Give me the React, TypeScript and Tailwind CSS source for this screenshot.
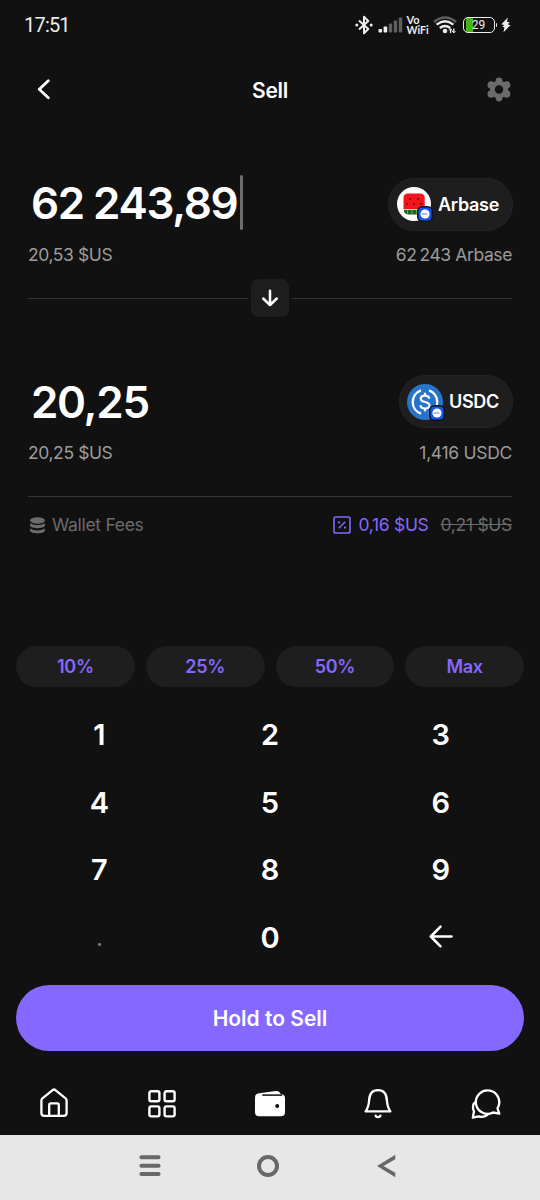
import type React from "react"
import clsx from "clsx"

const quickAmounts = ["10%", "25%", "50%", "Max"]
const keys = ["1", "2", "3", "4", "5", "6", "7", "8", "9", ".", "0", "back"]

const StatusBar = () => (
  <div className="flex h-[50px] shrink-0 items-center pl-6 pr-[29px]">
    <span className="font-[Roboto] text-[20px] leading-none tracking-[-0.8px] text-[#ededed]">17:51</span>
    <div className="ml-auto flex items-center text-[#ededed]">
      <svg width="18" height="20" viewBox="0 0 18 20" fill="none" stroke="currentColor" strokeWidth="2" strokeLinejoin="round">
        <path d="M4 5.6 13.3 14 9 18.2V1.8L13.3 6 4 14.4" />
        <circle cx="1.8" cy="10" r="1.5" fill="currentColor" stroke="none" />
        <circle cx="16.2" cy="10" r="1.5" fill="currentColor" stroke="none" />
      </svg>
      <svg className="ml-[5px]" width="25" height="16" viewBox="0 0 25 16">
        <rect x="0.5" y="12" width="3.6" height="3.5" rx="0.8" fill="currentColor" />
        <rect x="5.6" y="9.5" width="3.6" height="6" rx="0.8" fill="currentColor" />
        <rect x="10.8" y="6.5" width="3.4" height="9" rx="0.8" fill="#5f5f5f" />
        <rect x="15.8" y="3.5" width="3.4" height="12" rx="0.8" fill="#5f5f5f" />
        <rect x="20.8" y="0.5" width="3.4" height="15" rx="0.8" fill="#5f5f5f" />
      </svg>
      <div className="ml-[4px] w-[23px] font-[Lato] font-bold">
        <div className="text-[11px] leading-[11px]">Vo</div>
        <div className="text-[10.5px] leading-[11px]">WiFi</div>
      </div>
      <svg className="ml-[3px]" width="25" height="18" viewBox="0 0 25 18" fill="none" strokeWidth="2.4">
        <path d="M1 6Q12 -3 23 6" stroke="#5f5f5f" />
        <path d="M3.6 8.6Q12 2 20.4 8.6" stroke="currentColor" />
        <path d="M6.8 12Q12 8 17.2 12" stroke="currentColor" />
        <circle cx="12" cy="15" r="2.3" fill="currentColor" />
        <path d="M17.6 17V13M20.8 12.6V16.6" stroke="currentColor" strokeWidth="1.3" />
        <path d="m16 14.6 1.6-2 1.6 2M19.2 15l1.6 2 1.6-2" stroke="currentColor" strokeWidth="1" />
      </svg>
      <div className="ml-[5px] flex h-4 w-8 items-center rounded-[5px] border-[1.5px] border-[#ededed] bg-[linear-gradient(90deg,transparent_2px,#43b410_2px,#43b410_9px,transparent_9px)]">
        <span className="w-full text-center font-[Roboto] text-[12px] leading-none">29</span>
      </div>
      <div className="ml-px h-1 w-[1.5px] rounded-r bg-[#ededed]" />
      <svg className="ml-[4px]" width="10" height="16" viewBox="0 0 10 16" fill="currentColor">
        <path d="M6.8 0.5 0.4 7.2 3.6 8.2 1.2 9.6 3.4 10.4 2.4 15.5 9.4 8.2 6.6 7.2 9 5.6 6 4.8Z" />
      </svg>
    </div>
  </div>
)

const GearIcon = () => (
  <svg width="24" height="26" viewBox="0 0 24 26" fill="#6b6b6b">
    <circle cx="12" cy="12.5" r="9" />
    <circle cx="12" cy="3.9" r="3.4" />
    <circle cx="12" cy="21.1" r="3.4" />
    <circle cx="4.2" cy="8" r="3.7" />
    <circle cx="19.8" cy="8" r="3.7" />
    <circle cx="4.2" cy="17" r="3.7" />
    <circle cx="19.8" cy="17" r="3.7" />
    <circle cx="12" cy="12.5" r="4.2" fill="#111111" />
  </svg>
)

const WatermelonIcon = () => (
  <svg width="34" height="34" viewBox="0 0 34 34">
    <circle cx="17" cy="17" r="17" fill="#fff" />
    <path d="M7 21H27.5V24Q27 27.5 23 27.5H12Q7.5 27.5 7 24Z" fill="#1c5c26" />
    <path d="M10.5 23V27M15 23V27.5M19.5 23V27.5M24 23V27" stroke="#4fae43" strokeWidth="1.3" />
    <path d="M6.5 11Q6.5 6.5 11 6.5H23Q27.7 6.5 27.7 11V22H6.5Z" fill="#f5141e" />
    <path d="M6.8 22.5H27.5" stroke="#b9e6a0" strokeWidth="1" />
    <g fill="#3a0d10">
      <circle cx="13" cy="12" r="0.9" />
      <circle cx="21" cy="12" r="0.9" />
      <circle cx="10" cy="17" r="0.9" />
      <circle cx="17" cy="17" r="0.9" />
      <circle cx="24" cy="17" r="0.9" />
    </g>
  </svg>
)

const UsdcIcon = () => (
  <svg width="36" height="36" viewBox="0 0 36 36" fill="none" stroke="#fff">
    <circle cx="18" cy="18" r="18" fill="#2775ca" stroke="none" />
    <path d="M14 6.3a12.4 12.4 0 0 0 0 23.4M22 6.3a12.4 12.4 0 0 1 0 23.4" strokeWidth="2.3" />
    <path d="M22.3 14.6c-.3-2-1.8-3-4.3-3-2.6 0-4.2 1.2-4.2 3.1 0 4.6 8.7 2.1 8.7 6.6 0 2-1.8 3.2-4.5 3.2-2.8 0-4.4-1.1-4.6-3.3M18 8.8v2.8M18 24.5v2.8" strokeWidth="2.2" />
  </svg>
)

const TokenPill = ({ name, children, className }: { name: string; children: React.ReactNode; className: string }) => (
  <button
    className={clsx(
      "-mr-px flex h-[53px] items-center rounded-full border border-[#242424] bg-[#1e1e1e] pr-[13px] text-[18px] font-semibold tracking-[-0.3px]",
      className
    )}
  >
    <span className="relative">
      {children}
      {/* network badge */}
      <svg className="absolute -bottom-[1px] -right-[2px]" width="16" height="16" viewBox="0 0 16 16">
        <rect width="16" height="16" rx="5.5" fill="#10131c" />
        <rect x="1.5" y="1.5" width="13" height="13" rx="4" fill="#1557ee" />
        <circle cx="8" cy="8" r="4.6" fill="#fff" />
        <path d="M4.6 8H10.4" stroke="#6f9af2" strokeWidth="1.2" />
      </svg>
    </span>
    <span>{name}</span>
  </button>
)

const navIcon = "h-[34px] w-[34px]"

const BottomNav = () => (
  <nav className="mt-[36px] flex justify-around">
    <svg className={navIcon} viewBox="0 0 34 34" fill="none" stroke="#fff" strokeWidth="2.3" strokeLinejoin="round">
      <path d="M4.4 13.5Q4.4 12.2 5.4 11.3L15.6 3.1Q17 2 18.4 3.1L28.6 11.3Q29.6 12.2 29.6 13.5V26Q29.6 28.9 26.7 28.9H7.3Q4.4 28.9 4.4 26Z" />
      <path d="M12.2 28.5V18Q12.2 16.4 13.8 16.4H20.2Q21.8 16.4 21.8 18V28.5" />
    </svg>
    <svg className={navIcon} viewBox="0 0 34 34" fill="none" stroke="#fff" strokeWidth="2.4">
      <rect x="4.4" y="4.2" width="10" height="10" rx="1.8" />
      <rect x="19.6" y="4.2" width="10" height="10" rx="1.8" />
      <rect x="4.4" y="19.4" width="10" height="10" rx="1.8" />
      <rect x="19.6" y="19.4" width="10" height="10" rx="1.8" />
    </svg>
    <svg className={navIcon} viewBox="0 0 34 34" fill="#fff">
      <path d="M2.2 9.8Q2.2 6.8 6 6.2L23 4Q26.6 3.6 27.8 7.6H10Z" />
      <path d="M2 11Q2 7.2 6 7.2H28Q32 7.2 32 11.2V25Q32 29.3 27.8 29.3H6.2Q2 29.3 2 25Z" />
      <path d="M10 8.2H28.5" stroke="#333" strokeWidth="1.7" strokeLinecap="round" />
      <circle cx="24.2" cy="19" r="2" fill="#111" />
    </svg>
    <svg className={navIcon} viewBox="0 0 34 34" fill="none" stroke="#fff" strokeWidth="2.3" strokeLinejoin="round" strokeLinecap="round">
      <path d="M4.6 24.4Q7.5 20.5 8.1 13.5C8.4 6.5 12 3.1 17 3.1S25.6 6.5 25.9 13.5Q26.5 20.5 29.4 24.4Z" />
      <path d="M14.6 28.6Q15 30.2 17 30.2T19.4 28.6" />
    </svg>
    <svg className={navIcon} viewBox="0 0 34 34" fill="none" stroke="#fff" strokeWidth="2.3" strokeLinejoin="round" strokeLinecap="round">
      <path d="M28.5 21.3A11.7 11.7 0 1 0 24 25.5L30.3 26.7Z" />
      <path d="M5.5 15.7Q2.6 19 5 24.5L3.8 30.6L9.5 29.3Q14.5 30.8 18.5 27.8" />
    </svg>
  </nav>
)

const SystemBar = () => (
  <div className="flex h-[65px] shrink-0 items-center justify-center gap-[94px] bg-[#e7e7e7] pb-[3px] pr-[4px]">
    <svg width="24" height="24" viewBox="0 0 24 24" stroke="#686868" strokeWidth="4" strokeLinecap="round">
      <path d="M3.4 3.2H20.6M3.4 11.7H20.6M3.4 20H20.6" />
    </svg>
    <svg width="24" height="24" viewBox="0 0 24 24" fill="none" stroke="#686868" strokeWidth="4">
      <circle cx="12" cy="12" r="9" />
    </svg>
    <svg width="24" height="24" viewBox="0 0 24 24" fill="#686868">
      <path d="M21.3 0.8V5.2L9.5 12L21.3 18.8V23.2L3 12Z" />
    </svg>
  </div>
)

export default function App() {
  return (
    <div className="flex h-[1200px] w-[540px] flex-col overflow-hidden bg-[#111111] font-[Inter,sans-serif] text-white">
      <StatusBar />

      {/* Header */}
      <header className="grid h-20 shrink-0 grid-cols-3 items-center pl-[36px] pr-[29px]">
        <svg width="16" height="22" viewBox="0 0 16 22" fill="none" stroke="#fff" strokeWidth="2.8" strokeLinecap="round" strokeLinejoin="round">
          <path d="M12.3 1.8 3.3 10.3 12.3 18.8" />
        </svg>
        <h1 className="pr-[7px] pt-[2px] text-center text-[21px] font-semibold tracking-[-0.3px]">Sell</h1>
        <div className="flex justify-end">
          <GearIcon />
        </div>
      </header>

      {/* You sell */}
      <section className="px-7 pt-[45px]">
        <div className="flex h-[55px] items-center justify-between">
          <div className="flex items-center pl-[3px]">
            <span className="text-[44px] font-semibold leading-none tracking-[-1.3px]">
              62<span className="ml-[9px]">243,89</span>
            </span>
            <span className="ml-[3px] h-[55px] w-[3px] rounded bg-[#6d6d6d]" />
          </div>
          <TokenPill name="Arbase" className="mt-[3px] gap-[7px] pl-2">
            <WatermelonIcon />
          </TokenPill>
        </div>
        <div className="mt-[13px] flex h-6 items-center justify-between text-[17.5px] tracking-[-0.4px] text-[#9b9b9b]">
          <span>20,53 $US</span>
          <span>
            62<span className="ml-[3px]">243 Arbase</span>
          </span>
        </div>
      </section>

      {/* Swap direction */}
      <div className="mt-[12px] flex h-[38px] shrink-0 items-center gap-[3px] px-7">
        <div className="h-px flex-1 bg-[#333]" />
        <button className="flex h-[38px] w-[38px] items-center justify-center rounded-lg bg-[#1e1e1e]">
          <svg width="18" height="18" viewBox="0 0 18 18" fill="none" stroke="#fff" strokeWidth="2.5" strokeLinecap="round" strokeLinejoin="round">
            <path d="M9 1.8V15.8M2.2 9.5 9 16 15.8 9.5" />
          </svg>
        </button>
        <div className="h-px flex-1 bg-[#333]" />
      </div>

      {/* You receive */}
      <section className="px-7 pt-[58px]">
        <div className="flex h-[54px] items-center justify-between">
          <span className="pl-[3px] text-[44px] font-semibold leading-none tracking-[-1.3px]">20,25</span>
          <TokenPill name="USDC" className="mb-px gap-[6px] pl-[7px]">
            <UsdcIcon />
          </TokenPill>
        </div>
        <div className="mt-3 flex h-6 items-center justify-between text-[17.5px] tracking-[-0.4px] text-[#9b9b9b]">
          <span>20,25 $US</span>
          <span className="tracking-[-0.3px]">1,416 USDC</span>
        </div>
        <div className="mt-[31px] h-px bg-[#383838]" />
        <div className="mt-[16px] flex h-6 items-center text-[17.5px] tracking-[-0.3px] text-[#6b6b6b]">
          <svg className="ml-[1px]" width="17" height="17" viewBox="0 0 17 17" fill="#6b6b6b">
            <ellipse cx="8.5" cy="3.5" rx="7.5" ry="3.2" />
            <path d="M1 6.2Q8.5 10 16 6.2V8.6C15 12.2 2 12.2 1 8.6Z" />
            <path d="M1 11.4Q8.5 15.4 16 11.4V13.6C15 17.4 2 17.4 1 13.6Z" />
          </svg>
          <span className="ml-[6px]">Wallet Fees</span>
          <svg className="ml-auto" width="18" height="18" viewBox="0 0 18 18" fill="none" stroke="#8468ff">
            <rect x="1" y="1" width="16" height="16" rx="1.8" strokeWidth="1.6" />
            <path d="M5.8 12.2 12.2 5.8" strokeWidth="1.5" />
            <circle cx="6" cy="6.4" r="1.1" fill="#8468ff" stroke="none" />
            <circle cx="12" cy="11.6" r="1.1" fill="#8468ff" stroke="none" />
          </svg>
          <span className="ml-[7px] text-[#8468ff]">0,16 $US</span>
          <span className="ml-3 line-through">0,21 $US</span>
        </div>
      </section>

      {/* Quick amounts */}
      <div className="mt-[109px] grid h-[41px] shrink-0 grid-cols-4 gap-[11px] px-4">
        {quickAmounts.map((label) => (
          <button key={label} className="rounded-full bg-[#1e1e1e] text-[18px] font-semibold tracking-[-0.3px] text-[#8468ff]">
            {label}
          </button>
        ))}
      </div>

      {/* Keypad */}
      <div className="mt-[14px] grid h-[270px] shrink-0 grid-cols-3 grid-rows-4 px-[14px] text-[29px] font-semibold">
        {keys.map((key) => (
          <button key={key} className="flex items-center justify-center">
            {key === "back" ? (
              <svg width="26" height="26" viewBox="0 0 26 26" fill="none" stroke="#fff" strokeWidth="2.6" strokeLinecap="round" strokeLinejoin="round">
                <path d="M23.5 12.5H3M12.5 2.7 2.8 12.5 12.5 22.3" />
              </svg>
            ) : (
              <span className={clsx(key === "." && "pt-[3px] text-[20px] text-[#777]")}>{key}</span>
            )}
          </button>
        ))}
      </div>

      <div className="mt-[14px] px-4">
        <button className="h-[66px] w-full rounded-full bg-[#8468ff] pt-[2px] text-[21px] font-semibold">Hold to Sell</button>
      </div>

      <div className="flex-1">
        <BottomNav />
      </div>
      <SystemBar />
    </div>
  )
}
